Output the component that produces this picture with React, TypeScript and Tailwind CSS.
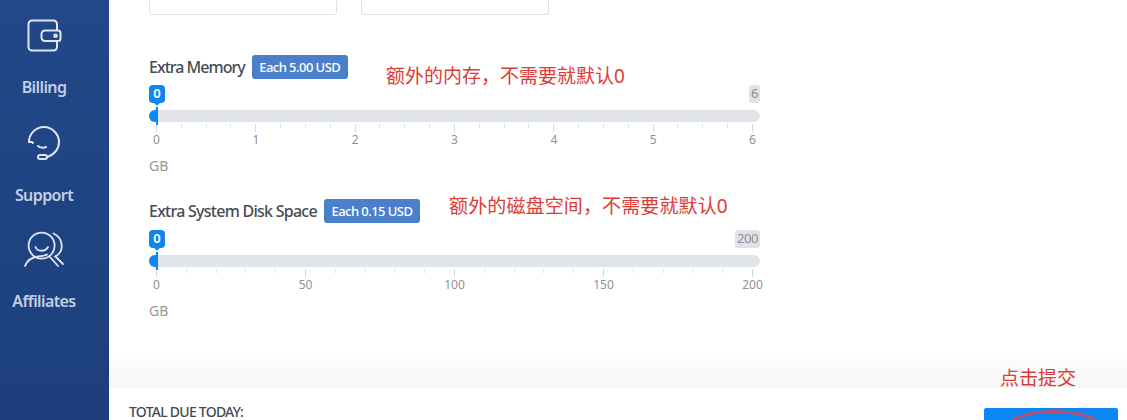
const sans = { fontFamily: '"Noto Sans", "Noto Sans CJK SC", sans-serif' };

function Wallet() {
  return (
    <svg width="35" height="33" viewBox="0 0 35 33" fill="none" stroke="currentColor" strokeWidth="2" strokeLinecap="round" strokeLinejoin="round">
      <path d="M30 11V5a3.500 3.500 0 0 0-3.500-3.500H5A3.500 3.500 0 0 0 1.500 5v23A3.500 3.500 0 0 0 5 31.500h21.500A3.500 3.500 0 0 0 30 28v-6" />
      <path d="M18 11.500h13a2.500 2.500 0 0 1 2.500 2.500v5.500A2.500 2.500 0 0 1 31 22H18a3.500 3.500 0 0 1-3.500-3.500V15a3.500 3.500 0 0 1 3.500-3.500z" />
      <circle cx="28.500" cy="16.700" r="1.300" />
    </svg>
  );
}

function Headset() {
  return (
    <svg width="36" height="36" viewBox="0 0 36 36" fill="none" stroke="currentColor" strokeWidth="2" strokeLinecap="round" strokeLinejoin="round">
      <path d="M3 17a15 15 0 0 1 15-15c8 0 15 7 15 15 0 7-5 13-12 15" />
      <path d="M3 17h3l1 1" />
      <path d="M12 21c2 2 6 2 8 1" />
      <rect x="12" y="30" width="9" height="4" rx="2" />
    </svg>
  );
}

function People() {
  return (
    <svg width="42" height="38" viewBox="0 0 42 38" fill="none" stroke="currentColor" strokeWidth="1.800" strokeLinecap="round" strokeLinejoin="round">
      <circle cx="18.600" cy="14.600" r="13" />
      <path d="M12.500 16c2 5 10 5 12.500 0" />
      <path d="M30.500 2.500C36 5 39 10 38.700 16c-.2 4-2.500 7.500-6.700 9.500" />
      <path d="M2 35C5 28 10 26 15 25.500c3.500-.3 6.500-.5 9-2" />
      <path d="M27 26l8 9" />
      <path d="M32.500 25.500l7.500 7.500" />
    </svg>
  );
}

function NavItem({ icon, label, h, gap }: { icon: React.ReactNode; label: string; h: string; gap: string }) {
  return (
    <div className={`flex flex-col items-center ${h}`}>
      <div className="flex h-[36px] items-center justify-center text-[#dfe6f3]">{icon}</div>
      <div className={`${gap} text-[16px] leading-[22px] font-semibold tracking-[-0.6px] whitespace-nowrap text-[#c3cfe4]`}>{label}</div>
    </div>
  );
}

function Ruler({ labels, minor }: { labels: string[]; minor: number }) {
  const total = (labels.length - 1) * minor + 1;
  return (
    <div className="ml-[7px] w-[597px]">
      <div className="flex h-[8px] justify-between">
        {Array.from({ length: total }).map((_, i) => (
          <div key={i} className={i % minor === 0 ? "h-[8px] w-px bg-[#d5d8dd]" : "h-[4px] w-px bg-[#dcdfe3]"} />
        ))}
      </div>
      <div className="flex justify-between">
        {labels.map((l) => (
          <div key={l} className="flex w-px justify-center">
            <span className="text-[12px] leading-[16px] text-[#909193]">{l}</span>
          </div>
        ))}
      </div>
    </div>
  );
}

function Slider({ title, titleSpacing, price, max, labels, minor, bubbleGap }: { title: string; titleSpacing: string; price: string; max: string; labels: string[]; minor: number; bubbleGap: string }) {
  return (
    <section className="w-[611px]">
      <div className="flex h-[24px] items-center gap-[7px]">
        <h3 className={`-mt-[1px] text-[16px] leading-[24px] font-medium ${titleSpacing} whitespace-nowrap text-[#484c52]`}>{title}</h3>
        <span className="w-[96px] rounded-[3px] bg-[#4a80c9] text-center text-[13px] leading-[24px] font-medium tracking-[-0.55px] whitespace-nowrap text-white">{price}</span>
      </div>
      <div className={`${bubbleGap} flex items-start justify-between`}>
        <div className="relative flex h-[18px] w-[16px] items-center justify-center rounded-[4px] bg-[#0d87f0] text-[13px] font-semibold text-white">
          0
          <div className="absolute -bottom-[2px] left-[6px] size-[4px] rotate-45 bg-[#0d87f0]" />
        </div>
        <div className="flex h-[18px] items-center rounded-[3px] bg-[#e0e2e5] px-[2px] text-[13px] tracking-[-0.4px] text-[#8b9097]">{max}</div>
      </div>
      <div className="relative mt-[7px] h-[12px] rounded-full bg-[#e0e3e7]">
        <div className="h-[12px] w-[8px] rounded-l-full bg-[#0d87f0]" />
        <div className="absolute top-[-3px] left-[7px] h-[18px] w-[2px] bg-[#0d87f0]" />
      </div>
      <div className="mt-[2px]">
        <Ruler labels={labels} minor={minor} />
      </div>
      <div className="mt-[9px] text-[14px] leading-[18px] text-[#96999e]">GB</div>
    </section>
  );
}

export default function App() {
  return (
    <div className="relative flex h-[420px] w-[1127px] overflow-hidden bg-white" style={sans}>
      <aside className="flex w-[109px] shrink-0 flex-col items-center bg-gradient-to-b from-[#224889] to-[#1d3f7c] pt-[17px] pr-[21px]">
        <NavItem icon={<Wallet />} label="Billing" h="h-[108px]" gap="mt-[23px]" />
        <NavItem icon={<Headset />} label="Support" h="h-[107px]" gap="mt-[23px]" />
        <NavItem icon={<People />} label="Affiliates" h="h-[100px]" gap="mt-[22px]" />
      </aside>

      <main className="flex min-w-0 flex-1 flex-col">
        <div className="flex gap-[24px] pl-[40px]">
          <div className="h-[15px] w-[188px] rounded-b-[3px] border border-t-0 border-[#dfe1e4]" />
          <div className="h-[15px] w-[188px] rounded-b-[3px] border border-t-0 border-[#dfe1e4]" />
        </div>

        <div className="flex flex-col gap-[24px] pt-[40px] pl-[40px]">
          <Slider title="Extra Memory" titleSpacing="tracking-[-0.98px]" price="Each 5.00 USD" max="6" labels={["0", "1", "2", "3", "4", "5", "6"]} minor={4} bubbleGap="mt-[6px]" />
          <Slider title="Extra System Disk Space" titleSpacing="tracking-[-0.74px]" price="Each 0.15 USD" max="200" labels={["0", "50", "100", "150", "200"]} minor={5} bubbleGap="mt-[7px]" />
        </div>

        <div className="mt-auto h-[38px] shrink-0 bg-gradient-to-b from-white to-[#f6f6f6]" />
        <footer className="flex h-[32px] shrink-0 items-start justify-between bg-white pr-[9px] pl-[20px]">
          <div className="pt-[15px] text-[14px] leading-[18px] font-medium tracking-[-0.75px] text-[#45484d]">TOTAL DUE TODAY:</div>
          <div className="mt-[20px] h-[30px] w-[134px] rounded-[2px] bg-[#0d87f5]" />
        </footer>
      </main>

      <div className="absolute top-[63px] left-[386px] text-[19px] leading-[26px] text-[#dc3b36]">额外的内存，不需要就默认0</div>
      <div className="absolute top-[193px] left-[449px] text-[19px] leading-[26px] tracking-[0.13px] text-[#dc3b36]">额外的磁盘空间，不需要就默认0</div>
      <div className="absolute top-[365px] left-[1000px] text-[19px] leading-[26px] text-[#dc3b36]">点击提交</div>
      <div className="absolute top-[410px] left-[1004px] h-[40px] w-[100px] rounded-[50%] border-[3px] border-[#bd4f6c]" />
    </div>
  );
}
